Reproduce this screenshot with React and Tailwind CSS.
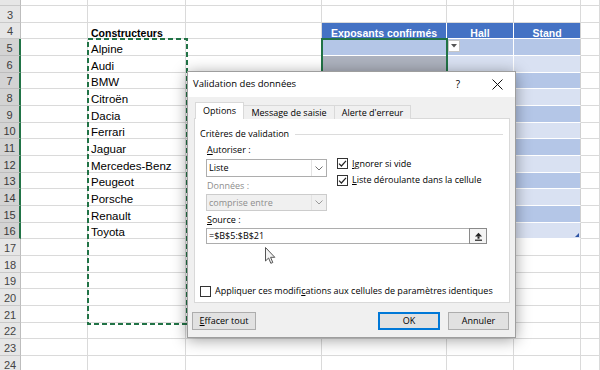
import React from "react";

const names = {
  5: "Alpine",
  6: "Audi",
  7: "BMW",
  8: "Citroën",
  9: "Dacia",
  10: "Ferrari",
  11: "Jaguar",
  12: "Mercedes-Benz",
  13: "Peugeot",
  14: "Porsche",
  15: "Renault",
  16: "Toyota",
};

function topOf(n) {
  return Math.round(6 + ((n - 3) * 50) / 3);
}

function Row({ n }) {
  const first = n === 2;
  const h = first ? 6 : topOf(n + 1) - topOf(n);
  const hc = first ? "h-[6px]" : h === 17 ? "h-[17px]" : "h-[16px]";
  const sel = n >= 5 && n <= 16;
  const head = n === 4;
  const band = n % 2 === 1 ? "bg-[#b4c6e7]" : "bg-[#d9e1f2]";
  const cell = "shrink-0 border-r border-b border-[#dadada] flex items-end pl-[3px] leading-none overflow-hidden whitespace-nowrap";
  const tcell = "shrink-0 border-r border-b border-white flex items-end justify-center leading-none overflow-hidden whitespace-nowrap";

  let dCls, eCls, fCls;
  if (head) {
    dCls = `${tcell} w-[125px] bg-[#4472c4] text-white font-bold text-[10.5px]`;
    eCls = `${tcell} w-[67px] bg-[#4472c4] text-white font-bold text-[10.5px]`;
    fCls = `${tcell} w-[67px] bg-[#4472c4] text-white font-bold text-[10.5px] border-r-[#d0d0d0]`;
  } else if (sel) {
    dCls = `${tcell} w-[125px] ${n === 5 ? "bg-[#b4c6e7]" : "bg-[#adb2be]"}`;
    eCls = `${tcell} w-[67px] ${band} items-start justify-start`;
    fCls = `${tcell} w-[67px] ${band} border-r-[#d0d0d0] relative`;
  } else {
    dCls = `${cell} w-[125px]`;
    eCls = `${cell} w-[67px]`;
    fCls = `${cell} w-[67px]`;
  }

  return (
    <div className={`flex ${hc}`}>
      <div
        className={`shrink-0 w-[21px] flex items-end justify-center leading-none text-[11px] border-b ${
          sel
            ? "bg-[#d3d3d3] text-[#3a3a3a] border-b-[#bdbdbd] border-r-2 border-r-[#217346]"
            : "bg-[#e6e6e6] text-[#444] border-b-[#c9c9c9] border-r border-r-[#bdbdbd]"
        }`}
      >
        <span className="pb-[1px]">{first ? "" : n}</span>
      </div>
      <div className={`${cell} w-[67px]`}></div>
      <div className={`${cell} w-[98px] ${head ? "font-bold text-[10.5px]" : "text-[11.5px]"}`}>
        {head ? "Constructeurs" : names[n] || ""}
      </div>
      <div className={`${cell} w-[136px]`}></div>
      <div className={dCls}>{head ? "Exposants confirmés" : ""}</div>
      <div className={eCls}>
        {head ? "Hall" : ""}
        {n === 5 && (
          <div className="mt-[1px] ml-px w-[12px] h-[12px] bg-white border border-[#c6c6c6] flex items-center justify-center">
            <svg width="6" height="4" viewBox="0 0 6 4">
              <path d="M0 0 H6 L3 3.5 Z" fill="#555" />
            </svg>
          </div>
        )}
      </div>
      <div className={fCls}>
        {head ? "Stand" : ""}
        {n === 16 && (
          <svg className="absolute right-[1px] bottom-[1px]" width="4" height="4" viewBox="0 0 4 4">
            <path d="M4 0 V4 H0 Z" fill="#2f55a4" />
          </svg>
        )}
      </div>
      <div className={`${cell} flex-1`}></div>
    </div>
  );
}

function Box({ checked }) {
  return (
    <span className="w-[11px] h-[11px] border border-[#333] bg-white flex items-center justify-center shrink-0">
      {checked && (
        <svg width="9" height="9" viewBox="0 0 9 9">
          <path d="M1 4.6 L3.4 7 L8 1.8" fill="none" stroke="#222" strokeWidth="1.2" />
        </svg>
      )}
    </span>
  );
}

function Chevron({ color }) {
  return (
    <svg width="8" height="5" viewBox="0 0 8 5">
      <path d="M0.5 0.5 L4 4 L7.5 0.5" fill="none" stroke={color} strokeWidth="1" />
    </svg>
  );
}

function Dialog() {
  return (
    <div className="absolute left-[187px] top-[71px] w-[329px] h-[267px] bg-[#f0f0f0] border border-[#9e9e9e] shadow-[0_2px_14px_rgba(0,0,0,0.38)] font-['Open_Sans',sans-serif] text-[9px] text-black flex flex-col">
      <div className="h-[25px] bg-white flex items-center pl-[5px] shrink-0">
        <span className="text-[9.5px]">Validation des données</span>
        <span className="ml-auto w-[12px] text-center text-[10px]">?</span>
        <span className="ml-[27px] mr-[12px] w-[12px] h-[12px] flex items-center justify-center">
          <svg width="11" height="11" viewBox="0 0 11 11">
            <path d="M0.5 0.5 L10.5 10.5 M10.5 0.5 L0.5 10.5" stroke="#111" strokeWidth="1" />
          </svg>
        </span>
      </div>
      <div className="flex items-end ml-[7px] mt-[6px] h-[16px] relative z-10">
        <div className="w-[49px] h-[17px] bg-white border border-[#d9d9d9] border-b-0 flex items-center justify-center">
          Options
        </div>
        <div className="w-[91px] h-[14px] bg-[#f0f0f0] border border-[#d9d9d9] border-l-0 border-b-0 flex items-center justify-center">
          Message de saisie
        </div>
        <div className="w-[76px] h-[14px] bg-[#f0f0f0] border border-[#d9d9d9] border-l-0 border-b-0 flex items-center justify-center">
          Alerte d'erreur
        </div>
      </div>
      <div className="ml-[6px] w-[316px] h-[185px] bg-white border border-[#d9d9d9] -mt-px flex flex-col">
        <div className="mt-[8px] h-[14px] flex items-center pl-[5px]">
          <span>Critères de validation</span>
          <span className="flex-1 h-px bg-[#dcdcdc] ml-[6px] mr-[6px]"></span>
        </div>
        <div className="flex">
          <div className="ml-[11px] w-[121px] flex flex-col">
            <div className="h-[18px] flex items-center pl-px">
              <span>
                <span className="underline">A</span>utoriser :
              </span>
            </div>
            <div className="h-[18px] border border-[#adadad] bg-white flex items-center">
              <span className="pl-[2px] flex-1">Liste</span>
              <span className="w-[15px] h-full border-l border-[#e3e3e3] flex items-center justify-center">
                <Chevron color="#707070" />
              </span>
            </div>
            <div className="h-[17px] flex items-center pl-px text-[#8d8d8d]">Données :</div>
            <div className="h-[17px] border border-[#cccccc] bg-[#f0f0f0] flex items-center text-[#8d8d8d]">
              <span className="pl-[2px] flex-1">comprise entre</span>
              <span className="w-[15px] h-full border-l border-[#e3e3e3] flex items-center justify-center">
                <Chevron color="#9a9a9a" />
              </span>
            </div>
          </div>
          <div className="ml-[10px] pt-[14px] flex flex-col">
            <div className="h-[17px] flex items-center gap-[4px]">
              <Box checked />
              <span>
                <span className="underline">I</span>gnorer si vide
              </span>
            </div>
            <div className="h-[16px] flex items-center gap-[4px]">
              <Box checked />
              <span>
                <span className="underline">L</span>iste déroulante dans la cellule
              </span>
            </div>
          </div>
        </div>
        <div className="ml-[12px] h-[17px] flex items-center">
          <span>
            <span className="underline">S</span>ource :
          </span>
        </div>
        <div className="ml-[11px] w-[281px] h-[16px] border border-[#adadad] bg-white flex items-center">
          <span className="pl-[2px] flex-1">=$B$5:$B$21</span>
          <span className="w-[18px] h-[16px] -mr-px border border-[#8a8a8a] bg-[#f4f4f4] flex items-center justify-center">
            <svg width="9" height="9" viewBox="0 0 9 9">
              <path d="M4.5 0.8 L8 4.5 L1 4.5 Z" fill="#222" />
              <rect x="3.5" y="4.4" width="2" height="2.3" fill="#222" />
              <rect x="1" y="7.6" width="7" height="1.2" fill="#222" />
            </svg>
          </span>
        </div>
        <div className="mt-[39px] ml-[5px] h-[16px] flex items-center gap-[4px]">
          <Box />
          <span>
            Appliquer ces modifi<span className="underline">c</span>ations aux cellules de paramètres identiques
          </span>
        </div>
      </div>
      <div className="mt-[9px] h-[18px] flex">
        <div className="ml-[4px] w-[64px] h-[18px] bg-[#e1e1e1] border border-[#adadad] flex items-center justify-center">
          <span>
            <span className="underline">E</span>ffacer tout
          </span>
        </div>
        <div className="ml-auto w-[62px] h-[18px] bg-[#e1e1e1] border-2 border-[#0078d7] flex items-center justify-center">
          OK
        </div>
        <div className="ml-[8px] mr-[6px] w-[61px] h-[18px] bg-[#e1e1e1] border border-[#adadad] flex items-center justify-center">
          Annuler
        </div>
      </div>
    </div>
  );
}

export default function App() {
  const rows = [];
  for (let n = 2; n <= 24; n++) rows.push(n);
  return (
    <div className="relative w-[600px] h-[370px] overflow-hidden bg-white font-['Liberation_Sans',Arial,sans-serif] text-black">
      <div className="flex flex-col">
        {rows.map((n) => (
          <Row key={n} n={n} />
        ))}
      </div>
      {/* active selection D5:D16 */}
      <div className="absolute left-[321px] top-[38px] w-[127px] h-[202px] border-2 border-[#217346] pointer-events-none"></div>
      {/* marching ants B5:B21 */}
      <svg className="absolute left-[87px] top-[38px]" width="101" height="287" viewBox="0 0 101 287">
        <rect x="1" y="1" width="99" height="285" fill="none" stroke="#217346" strokeWidth="2" strokeDasharray="5 3" />
      </svg>
      <Dialog />
      {/* mouse cursor */}
      <svg className="absolute left-[265px] top-[247px]" width="12" height="18" viewBox="0 0 12 18">
        <path
          d="M0.5 0.5 L0.5 14 L3.6 11 L5.8 16.3 L7.8 15.5 L5.6 10.3 L9.8 10.3 Z"
          fill="#f4f4f4"
          stroke="#555"
          strokeWidth="1"
          strokeLinejoin="round"
        />
      </svg>
    </div>
  );
}
